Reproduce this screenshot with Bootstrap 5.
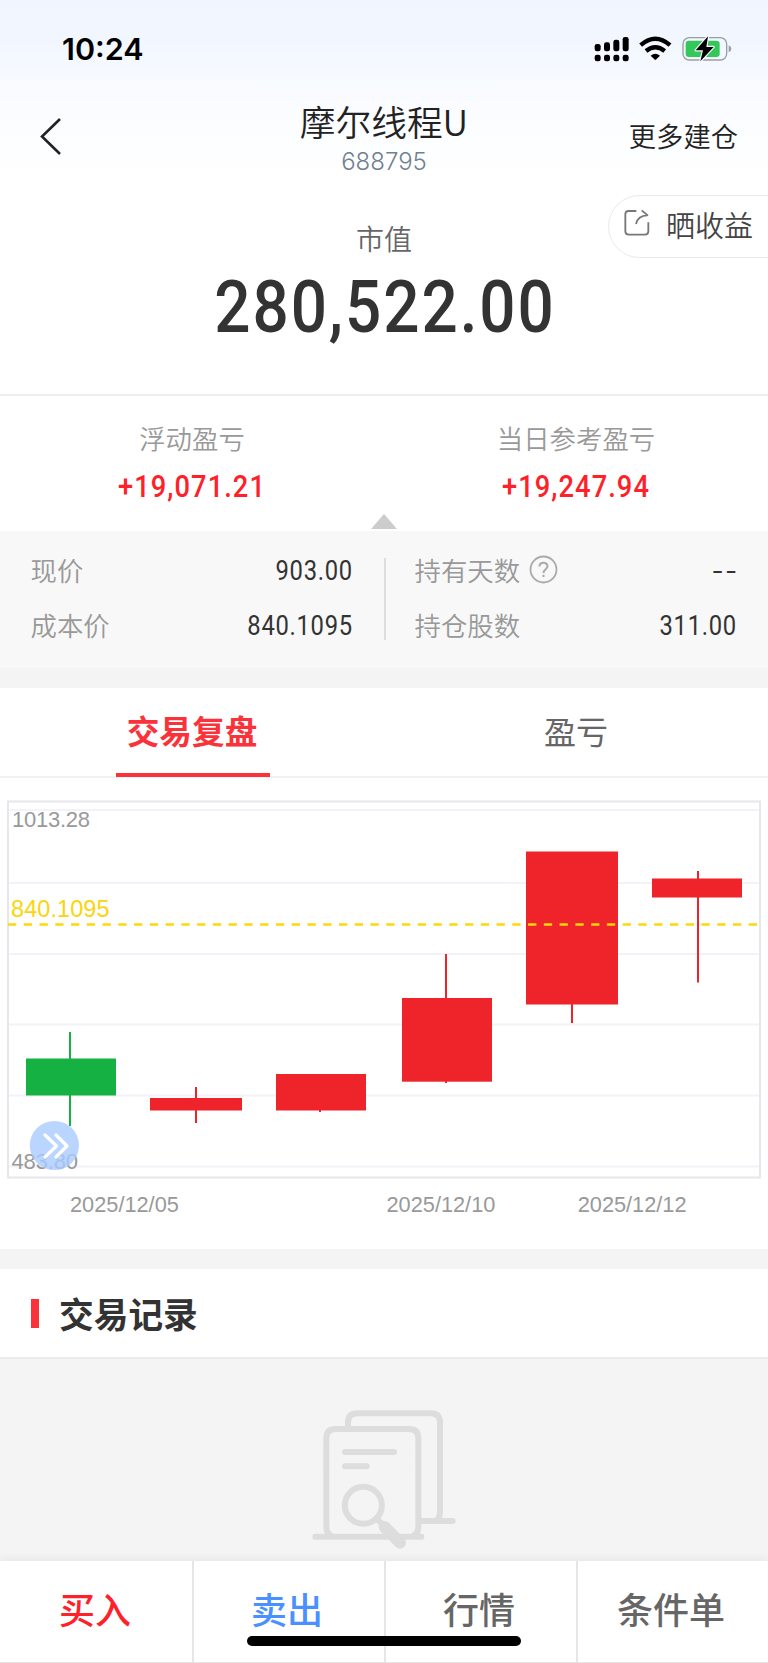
<!DOCTYPE html>
<html lang="zh-CN">
<head>
<meta charset="utf-8">
<meta name="viewport" content="width=device-width, initial-scale=1">
<title>摩尔线程U 688795</title>
<link rel="stylesheet" href="https://cdn.jsdelivr.net/npm/bootstrap@5.3.0/dist/css/bootstrap.min.css">
<style>
body{font-family:"Noto Sans CJK SC",sans-serif;color:#333;background:#fff;overflow-x:hidden}
svg{display:block}
.screen{width:768px;height:1663px;overflow:hidden}
.num{font-family:Roboto,"Noto Sans CJK SC",sans-serif;transform:scaleX(.88)}
.hero{height:396px;background:linear-gradient(#f0f5ff 0,#f1f6ff 34px,#fafcff 105px,#fff 180px);border-bottom:2px solid #eee}
.statusbar{height:98px;padding:0 34.5px 0 62px}
.clock{font:600 30.5px/98px Inter,sans-serif;color:#000}
.titlebar{height:80px;padding:0 30px 0 38px}
.side{width:180px}
.side.back{width:172px}
.stock{font-size:35.7px;line-height:50px;color:#222;font-weight:350;margin-top:-2px}
.code{font:300 24px/26px Inter,sans-serif;color:#708090;margin-top:3px}
.more{font-size:27.3px;color:#222;line-height:40px;font-weight:350;padding-top:17px}
.share{top:195px;right:-2px;width:162px;height:63px;border:1.5px solid #e9e9e9;border-radius:32px 0 0 32px;background:#fff;padding:0 0 4px 14px;gap:15px;font-size:29px;font-weight:350;color:#444}
.share svg{margin-top:-4px}
.cap-label{font-size:28px;line-height:40px;color:#666;margin-top:40px;font-weight:350}
.total{font-size:72.5px;line-height:80px;font-weight:500;letter-spacing:2.2px;margin:10px 0 0 2px}
.stats{height:135px;padding-top:23px}
.stat-label{font-size:26.4px;line-height:38px;color:#999;font-weight:350}
.stat-val{font-size:31px;line-height:40px;font-weight:500;color:#fe2129;letter-spacing:1.2px;margin-top:10px}
.tri{left:371px;bottom:2px;width:26px;height:15px;background:#ccc;clip-path:polygon(50% 0,100% 100%,0 100%)}
.details{height:137px;background:#f8f8f8;padding:11px 0 0}
.detail-col{width:384px;padding:0 31px 0 30.5px}
.detail-row{height:55px;font-size:26.4px;color:#999;font-weight:350}
.detail-row .num{font-size:27px;font-weight:400;color:#333;letter-spacing:.8px;transform-origin:right;padding-top:4px}
.detail-row .num.none{letter-spacing:2.8px;transform:scaleX(1.3);margin-right:-3px}
.rule{left:384px;top:27px;width:2px;height:82px;background:#ddd}
.band{height:20px;background:#f4f4f4}
.tabs{height:90px;border-bottom:2px solid #f1f1f3}
.tab{font-size:32px;line-height:84px;text-align:center;color:#666}
.tab.on{color:#fa3239;font-weight:700;font-size:32.7px}
.tab.on::after{content:"";position:absolute;left:115.5px;bottom:-1px;width:154px;height:4px;background:#fa3239}
.chart text{font-family:"Liberation Sans",Arial,sans-serif;fill:#999}
.section{height:90px;padding-left:31px;gap:20px;font-size:34.7px;font-weight:700;border-bottom:2px solid #ececec}
.tick{width:8px;height:29px;background:#fa3239}
.empty{height:202px;background:#f4f4f4;padding-top:31px}
.actions{height:102px;background:#fff;box-shadow:0 -2px 8px rgba(0,0,0,.06);border-bottom:1.5px solid #e5e5e5}
.action{font-size:36px;line-height:94px;text-align:center;color:#666;font-weight:500;padding-right:2px}
.action+.action{box-shadow:inset 2px 0 #e6e6e6}
.home{left:247px;bottom:16px;width:274px;height:10px;border-radius:5px;background:#000}
</style>
</head>
<body>
<div class="screen d-flex flex-column">
<header class="hero position-relative flex-shrink-0">
  <div class="statusbar d-flex justify-content-between align-items-center">
    <span class="clock">10:24</span>
    <svg width="142" height="28.4" viewBox="625 105 426 85">
      <g><rect x="633" y="132" width="18" height="22" rx="7"/><rect x="661" y="127" width="18" height="27" rx="7"/><rect x="689" y="119" width="18" height="35" rx="7"/><rect x="717" y="111" width="18" height="43" rx="7"/>
      <rect x="633" y="164" width="18" height="20" rx="7"/><rect x="661" y="164" width="18" height="20" rx="7"/><rect x="689" y="164" width="18" height="20" rx="7"/><rect x="717" y="164" width="18" height="20" rx="7"/></g>
      <g fill="none" stroke="#000" stroke-width="13"><path d="M771 135Q815 97 859 135"/><path d="M787 153Q815 130 843 153"/></g>
      <path d="M801 167Q815 155 829 167L818 178Q815 181 812 178Z"/>
      <rect x="898" y="113" width="131" height="67" rx="19" fill="none" stroke="#9a9da3" stroke-width="4"/>
      <path d="M1035 136Q1043 139 1043 146.500Q1043 154 1035 157Z" fill="#9a9da3"/>
      <rect x="906" y="122" width="102" height="49" rx="10" fill="#34c759"/>
      <path d="M973 109L936 151H958L950 184L990 141H968Z" stroke="#f5f9ff" stroke-width="7" paint-order="stroke" stroke-linejoin="round"/>
    </svg>
  </div>
  <nav class="titlebar d-flex justify-content-between align-items-start">
    <div class="side back pt-3"><svg class="mt-1" width="26" height="38" viewBox="0 0 26 38"><path d="M22 1L4 18.500L22 36" fill="none" stroke="#222" stroke-width="2.600"/></svg></div>
    <div class="text-center"><div class="stock">摩尔线程U</div><div class="code">688795</div></div>
    <div class="side more text-end">更多建仓</div>
  </nav>
  <a class="share position-absolute d-flex align-items-center text-decoration-none">
    <svg width="28" height="28" viewBox="718 627 84 84" fill="none" stroke="#777" stroke-width="5.500"><path d="M758 633H735Q725 633 725 643V694Q725 704 735 704H784Q794 704 794 694V667M757 672Q762 647 791 646M774 631L793 647"/></svg>
    <span>晒收益</span>
  </a>
  <div class="cap-label text-center">市值</div>
  <div class="total num text-center">280,522.00</div>
</header>

<section class="stats position-relative flex-shrink-0">
  <div class="row g-0 text-center">
    <div class="col-6"><div class="stat-label">浮动盈亏</div><div class="stat-val num">+19,071.21</div></div>
    <div class="col-6"><div class="stat-label">当日参考盈亏</div><div class="stat-val num">+19,247.94</div></div>
  </div>
  <div class="tri position-absolute"></div>
</section>

<section class="details position-relative d-flex flex-shrink-0">
  <div class="detail-col">
    <div class="detail-row d-flex justify-content-between align-items-center"><span>现价</span><span class="num">903.00</span></div>
    <div class="detail-row d-flex justify-content-between align-items-center"><span>成本价</span><span class="num">840.1095</span></div>
  </div>
  <div class="rule position-absolute"></div>
  <div class="detail-col">
    <div class="detail-row d-flex justify-content-between align-items-center"><span class="d-flex align-items-center">持有天数
      <svg style="margin-left:9px" width="29" height="29" viewBox="0 0 29 29" fill="none" stroke="#aaa" stroke-width="1.800"><circle cx="14.500" cy="14.500" r="13"/><path d="M10.500 11.500C10.500 6.500 18.500 6.500 18.500 11.300C18.500 14.300 14.500 14.200 14.500 18M14.500 19.800V22" stroke-width="2"/></svg></span><span class="num none">--</span></div>
    <div class="detail-row d-flex justify-content-between align-items-center"><span>持仓股数</span><span class="num">311.00</span></div>
  </div>
</section>
<div class="band flex-shrink-0"></div>

<div class="tabs row g-0 flex-shrink-0">
  <div class="tab on col-6 position-relative">交易复盘</div>
  <div class="tab col-6">盈亏</div>
</div>

<svg class="chart flex-shrink-0" width="768" height="471" viewBox="0 778 768 471">
  <g stroke="#f2f2f8" stroke-width="2"><path d="M8 810H760M8 883H760M8 954H760M8 1024.500H760M8 1095.500H760M8 1166.500H760"/></g>
  <rect x="8" y="801.500" width="752" height="376" fill="none" stroke="#e6e6eb" stroke-width="2"/>
  <g fill="#16b143"><rect x="26" y="1058.500" width="90" height="37"/><rect x="69" y="1032" width="2" height="94"/></g>
  <g fill="#ef242a">
    <rect x="150" y="1098" width="92" height="12.500"/><rect x="195" y="1087" width="2" height="36"/>
    <rect x="276" y="1074" width="90" height="36.500"/><rect x="319" y="1110" width="2" height="2"/>
    <rect x="402" y="998" width="90" height="83.700"/><rect x="445" y="954" width="2" height="129"/>
    <rect x="526" y="851.500" width="92" height="153"/><rect x="571" y="1004" width="2" height="19"/>
    <rect x="652" y="878.500" width="90" height="19"/><rect x="697" y="871" width="2" height="111.500"/>
  </g>
  <path d="M8 924.500H760" stroke="#ffd60a" stroke-width="2.300" stroke-dasharray="8.300 7.460"/>
  <text x="12" y="827.300" font-size="22" textLength="78">1013.28</text>
  <text x="11" y="917" font-size="23.500" textLength="98.500" style="fill:#fbd50b">840.1095</text>
  <text x="11.500" y="1169.300" font-size="22" textLength="66.500">483.80</text>
  <circle cx="54.400" cy="1145.500" r="24.600" fill="#a9cbff" opacity=".8"/>
  <path d="M45 1135L56.500 1146L45 1157M56 1135L67 1146L56 1157" fill="none" stroke="#fff" stroke-width="3.200" stroke-linecap="round" stroke-linejoin="round"/>
  <g font-size="21.750"><text x="70" y="1212">2025/12/05</text><text x="386.500" y="1212">2025/12/10</text><text x="577.700" y="1212">2025/12/12</text></g>
</svg>
<div class="band flex-shrink-0"></div>

<div class="section d-flex align-items-center flex-shrink-0"><span class="tick"></span><span>交易记录</span></div>
<div class="empty flex-shrink-0">
  <svg class="mx-auto" width="190" height="170" viewBox="-3 0 570 510" fill="none" stroke="#ddd" stroke-width="18" stroke-linecap="round">
    <path d="M174 110V98Q174 70 202 70H422Q450 70 450 98V365Q450 388 434 393M394 393H488"/>
    <path d="M125 438Q109 430 109 410V145Q109 117 137 117H357Q385 117 385 145V410Q385 430 369 438M76 440H394M165 186H312M165 229H230"/>
    <circle cx="220" cy="346" r="55.500"/><path d="M262 388L278 404"/><path d="M284 411L330 458" stroke-width="36"/>
  </svg>
</div>
<nav class="actions row g-0 position-relative flex-shrink-0">
  <div class="action col-3" style="color:#fe2129">买入</div>
  <div class="action col-3" style="color:#4a90ff">卖出</div>
  <div class="action col-3">行情</div>
  <div class="action col-3">条件单</div>
  <div class="home position-absolute"></div>
</nav>
</div>
<script src="https://cdn.jsdelivr.net/npm/bootstrap@5.3.0/dist/js/bootstrap.bundle.min.js"></script>
</body>
</html>
